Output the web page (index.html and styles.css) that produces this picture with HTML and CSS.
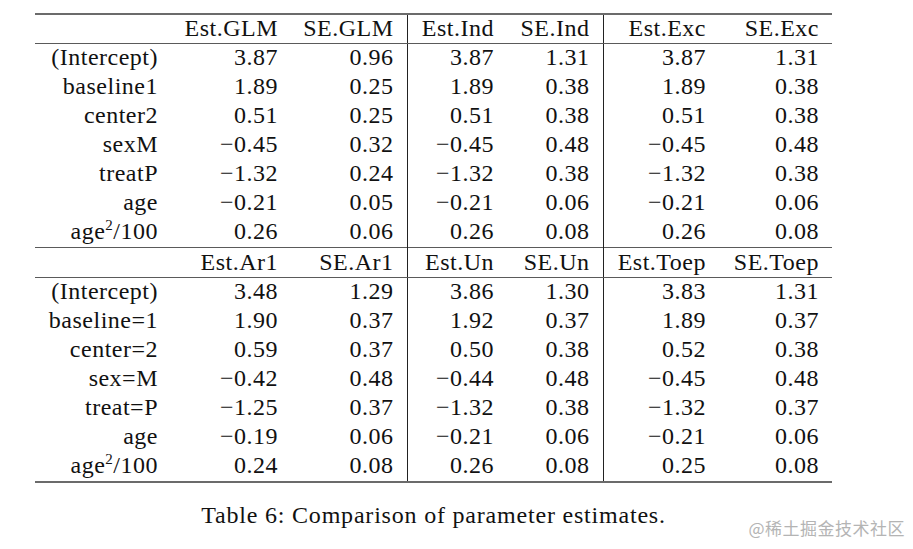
FILE: index.html
```html
<!DOCTYPE html>
<html lang="en">
<head>
<meta charset="utf-8">
<title>Table 6</title>
<link rel="stylesheet" href="styles.css">
</head>
<body>
<div class="page">
  <table class="est">
    <colgroup>
      <col class="c0"><col class="c1"><col class="c2"><col class="c3"><col class="c4"><col class="c5"><col class="c6">
    </colgroup>
    <tbody>
      <tr class="head top">
        <td></td><td>Est.GLM</td><td class="vr">SE.GLM</td><td>Est.Ind</td><td class="vr">SE.Ind</td><td>Est.Exc</td><td>SE.Exc</td>
      </tr>
      <tr class="first"><td>(Intercept)</td><td>3.87</td><td class="vr">0.96</td><td>3.87</td><td class="vr">1.31</td><td>3.87</td><td>1.31</td></tr>
      <tr><td>baseline1</td><td>1.89</td><td class="vr">0.25</td><td>1.89</td><td class="vr">0.38</td><td>1.89</td><td>0.38</td></tr>
      <tr><td>center2</td><td>0.51</td><td class="vr">0.25</td><td>0.51</td><td class="vr">0.38</td><td>0.51</td><td>0.38</td></tr>
      <tr><td>sexM</td><td>−0.45</td><td class="vr">0.32</td><td>−0.45</td><td class="vr">0.48</td><td>−0.45</td><td>0.48</td></tr>
      <tr><td>treatP</td><td>−1.32</td><td class="vr">0.24</td><td>−1.32</td><td class="vr">0.38</td><td>−1.32</td><td>0.38</td></tr>
      <tr><td>age</td><td>−0.21</td><td class="vr">0.05</td><td>−0.21</td><td class="vr">0.06</td><td>−0.21</td><td>0.06</td></tr>
      <tr><td>age<sup>2</sup>/100</td><td>0.26</td><td class="vr">0.06</td><td>0.26</td><td class="vr">0.08</td><td>0.26</td><td>0.08</td></tr>
      <tr class="head mid">
        <td></td><td>Est.Ar1</td><td class="vr">SE.Ar1</td><td>Est.Un</td><td class="vr">SE.Un</td><td>Est.Toep</td><td>SE.Toep</td>
      </tr>
      <tr class="first"><td>(Intercept)</td><td>3.48</td><td class="vr">1.29</td><td>3.86</td><td class="vr">1.30</td><td>3.83</td><td>1.31</td></tr>
      <tr><td>baseline=1</td><td>1.90</td><td class="vr">0.37</td><td>1.92</td><td class="vr">0.37</td><td>1.89</td><td>0.37</td></tr>
      <tr><td>center=2</td><td>0.59</td><td class="vr">0.37</td><td>0.50</td><td class="vr">0.38</td><td>0.52</td><td>0.38</td></tr>
      <tr><td>sex=M</td><td>−0.42</td><td class="vr">0.48</td><td>−0.44</td><td class="vr">0.48</td><td>−0.45</td><td>0.48</td></tr>
      <tr><td>treat=P</td><td>−1.25</td><td class="vr">0.37</td><td>−1.32</td><td class="vr">0.38</td><td>−1.32</td><td>0.37</td></tr>
      <tr><td>age</td><td>−0.19</td><td class="vr">0.06</td><td>−0.21</td><td class="vr">0.06</td><td>−0.21</td><td>0.06</td></tr>
      <tr class="last"><td>age<sup>2</sup>/100</td><td>0.24</td><td class="vr">0.08</td><td>0.26</td><td class="vr">0.08</td><td>0.25</td><td>0.08</td></tr>
    </tbody>
  </table>
  <p class="caption">Table 6: Comparison of parameter estimates.</p>
</div>
<div class="watermark">@稀土掘金技术社区</div>
</body>
</html>
```
FILE: styles.css
```css
html, body {
  margin: 0;
  padding: 0;
  background: #ffffff;
}

body {
  width: 913px;
  height: 549px;
  position: relative;
  overflow: hidden;
  font-family: "Liberation Serif", "Times New Roman", serif;
  color: #111111;
}

.page {
  padding: 13px 0 0 35px;
  width: 797px;
}

.est {
  border-collapse: collapse;
  table-layout: fixed;
  width: 797px;
  font-size: 24px;
  letter-spacing: 0.5px;
}

.c0 { width: 136px; }
.c1 { width: 120px; }
.c2 { width: 116px; }
.c3 { width: 100px; }
.c4 { width: 96px; }
.c5 { width: 116px; }
.c6 { width: 113px; }

.est td {
  text-align: right;
  padding: 0 13px 0 0;
  height: 29px;
  line-height: 27px;
  white-space: nowrap;
  vertical-align: top;
}

.est tr.head td {
  height: 28px;
  line-height: 27px;
}

.est tr.top td {
  border-top: 2px solid #6b6b6b;
  border-bottom: 1px solid #5a5a5a;
}

.est tr.mid td {
  height: 28px;
  padding-top: 1px;
  border-top: 1px solid #5a5a5a;
  border-bottom: 1px solid #5a5a5a;
}

.est tr.last td {
  border-bottom: 2px solid #6b6b6b;
}

.est td.vr {
  border-right: 1px solid #222222;
}

.est sup {
  font-size: 15px;
  line-height: 0;
  vertical-align: 9px;
}

.caption {
  margin: 17px 0 0 0;
  text-align: center;
  font-size: 24px;
  letter-spacing: 0.8px;
  line-height: 30px;
}

.watermark {
  position: absolute;
  right: 8px;
  bottom: 10px;
  font-family: "Noto Sans CJK SC", "Noto Sans", sans-serif;
  font-size: 17px;
  letter-spacing: 0.5px;
  color: #b4b4b4;
  line-height: 22px;
}
```
